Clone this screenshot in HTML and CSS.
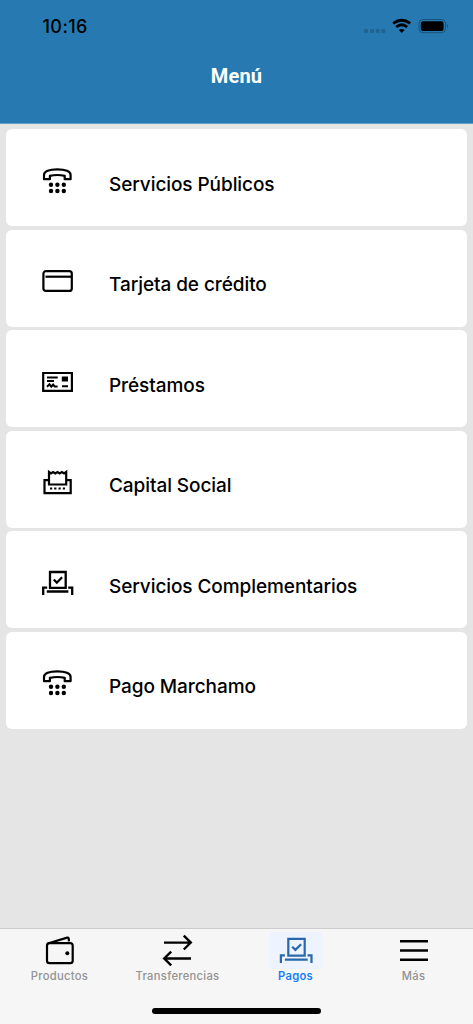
FILE: index.html
```html
<!DOCTYPE html>
<html lang="es">
<head>
<meta charset="utf-8">
<title>Menú</title>
<link rel="stylesheet" href="styles.css">
</head>
<body>
<svg width="0" height="0" class="symbols">
  <symbol id="phone" viewBox="0 0 34 32">
    <path d="M3 14.200V10C3 6.300 8 4.300 16.300 4.300s13.300 2 13.300 5.700v4.200h-5.900v-3.400q-7.400-1.600-14.800 0v3.400z" fill="none" stroke="currentColor" stroke-width="2.200" stroke-linejoin="round"/>
    <g fill="currentColor"><circle cx="10" cy="19.700" r="2.200"/><circle cx="16.400" cy="19.700" r="2.200"/><circle cx="22.800" cy="19.700" r="2.200"/><circle cx="10" cy="26" r="2.200"/><circle cx="16.400" cy="26" r="2.200"/><circle cx="22.800" cy="26" r="2.200"/></g>
  </symbol>
  <symbol id="ballot" viewBox="0 0 34 32">
    <g fill="none" stroke="currentColor" stroke-width="2.300">
      <path d="M9 5h15.700v15.800H9zM2.200 28v-7.300h4M31.200 28v-7.300h-4M5.800 24.500h21.600"/>
      <path d="M12.800 12.500l3 3.200 5.300-5.500"/>
    </g>
  </symbol>
</svg>
<div class="screen">
  <header class="header">
    <div class="status">
      <span class="time">10:16</span>
      <svg class="indicators" width="86" height="20" viewBox="0 0 86 20">
        <g fill="#1f6490"><rect x="1" y="11" width="4" height="4" rx="1"/><rect x="7" y="11" width="4" height="4" rx="1"/><rect x="12.700" y="11" width="4" height="4" rx="1"/><rect x="18.400" y="11" width="4" height="4" rx="1"/></g>
        <g fill="none" stroke="#000" stroke-width="2.800"><path d="M30.200 5.300q8.500-6.200 17 0"/><path d="M33.200 9q5.500-4.400 11 0"/></g>
        <path d="M35.800 11.900q2.900-2 5.800 0l-2.900 3.100z"/>
        <rect x="56" y="1.500" width="26.500" height="13.200" rx="4" fill="none" stroke="#17527a"/>
        <rect x="57.800" y="3.200" width="22.800" height="9.800" rx="2.500"/>
        <path d="M84 5.900q2.200 2.200 0 4.400z" fill="#17527a"/>
      </svg>
    </div>
    <h1 class="title">Menú</h1>
  </header>
  <main class="menu">
    <div class="card"><svg class="icon"><use href="#phone"/></svg><span class="label">Servicios Públicos</span></div>
    <div class="card">
      <svg class="icon" viewBox="0 0 34 32"><g fill="none" stroke="#000" stroke-width="2.200"><rect x="2.400" y="6.200" width="28.400" height="19.700" rx="2.500"/><path d="M4.500 11.700h26.300"/></g></svg>
      <span class="label">Tarjeta de crédito</span>
    </div>
    <div class="card">
      <svg class="icon" viewBox="0 0 34 32"><g fill="none" stroke="#000"><path stroke-width="2.200" d="M2.200 7h28.700v17.900H2.200z"/><path stroke-width="1.900" d="M6 11.500h10.700M6 15h7M21 20.300h6"/><path stroke-width="2" d="M6 20.800l2.500-2.500 1.800 2.300 1.800-2 1.500 1.800h3"/></g><path d="M20.800 10.500h6.200v5h-6.200z"/></svg>
      <span class="label">Préstamos</span>
    </div>
    <div class="card">
      <svg class="icon" viewBox="0 0 34 32"><g fill="none" stroke="#000" stroke-width="2.200"><path d="M8 14.200H3.500v13h26.200v-13h-4.500"/><path d="M8 18.500V6l2 1.500 2.100-1.500 2.200 1.500 2.200-1.500 2.200 1.500 2.200-1.500 2.200 1.500 2.100-1.500V18.500z"/></g><path d="M9 21.500h2.200v2H9zM13.200 21.500h2.200v2h-2.200zM17.500 21.500h2.200v2h-2.200zM21.800 21.500H24v2h-2.200z"/></svg>
      <span class="label">Capital Social</span>
    </div>
    <div class="card"><svg class="icon"><use href="#ballot"/></svg><span class="label">Servicios Complementarios</span></div>
    <div class="card"><svg class="icon"><use href="#phone"/></svg><span class="label">Pago Marchamo</span></div>
  </main>
  <nav class="tabs">
    <div class="tab">
      <svg class="tab-icon" viewBox="0 0 52 37"><g fill="none" stroke="#000" stroke-width="2.200"><rect x="13" y="11.200" width="25.700" height="20" rx="2.500"/><path d="M13.700 11.500L33.200 5.600q1.300-.3 1.500 1l.3 2.800" stroke-linejoin="round"/></g><circle cx="33.300" cy="21.300" r="2"/></svg>
      <span>Productos</span>
    </div>
    <div class="tab">
      <svg class="tab-icon" viewBox="0 0 52 37"><path d="M12 10.600h27M31.800 3.700l7 6.900-7 6.900M39 26.500H12M19.200 19.600l-7 6.900 7 6.900" fill="none" stroke="#000" stroke-width="2.400"/></svg>
      <span>Transferencias</span>
    </div>
    <div class="tab active">
      <svg class="tab-icon" viewBox="0 0 52 37"><g fill="none" stroke="currentColor" stroke-width="2.200"><path d="M18.300 6.800h16.400v16.900H18.300zM10.900 31v-7.700h4M41.500 31v-7.700h-4M14.900 27.700h22.800"/><path d="M22.200 14.700l3.200 3.200 5.700-5.700"/></g></svg>
      <span>Pagos</span>
    </div>
    <div class="tab">
      <svg class="tab-icon" viewBox="0 0 52 37"><path d="M12 9.300h28M12 18.500h28M12 27.700h28" stroke="#000" stroke-width="2.500"/></svg>
      <span>Más</span>
    </div>
    <div class="home"></div>
  </nav>
</div>
</body>
</html>
```
FILE: styles.css
```css
body { margin: 0; font-family: Inter, "Liberation Sans", sans-serif; }
.symbols { position: absolute; }
.screen { width: 473px; height: 1024px; display: flex; flex-direction: column; background: #e5e5e5; overflow: hidden; }
.header { box-sizing: border-box; height: 124px; background: #267ab1; border-bottom: 1px solid #60a0c8; flex: none; }
.status { box-sizing: border-box; height: 53px; display: flex; justify-content: space-between; align-items: center; padding: 1px 24px 0 42.500px; }
.time { font-size: 18px; font-weight: 500; line-height: 22px; letter-spacing: .4px; }
.indicators { margin-top: 2px; }
.title { margin: 8.500px 0 0; text-align: center; color: #fff; font: 700 20px/28px Roboto, sans-serif; letter-spacing: .2px; }
.menu { flex: 1; padding: 5.300px 6px 0; display: flex; flex-direction: column; gap: 3.500px; }
.card { box-sizing: border-box; height: 97px; flex: none; display: flex; align-items: flex-start; padding: 35.500px 35px 0; background: #fff; border-radius: 6px; }
.icon { width: 34px; height: 32px; flex: none; }
.label { margin: 8px 0 0 34px; font-size: 19px; font-weight: 500; line-height: 24px; letter-spacing: -.08px; white-space: nowrap; }
.tabs { box-sizing: border-box; height: 96px; border-top: 1px solid #cbcbcb; background: #f6f6f6; display: flex; flex-wrap: wrap; align-content: flex-start; justify-content: center; }
.tab { width: 118px; height: 79px; padding-top: 3px; box-sizing: border-box; display: flex; flex-direction: column; align-items: center; color: #929292; font-size: 11.200px; font-weight: 500; line-height: 14px; letter-spacing: .3px; }
.tab-icon { width: 52px; height: 37px; color: #2868ab; }
.active { color: #147efb; font-weight: 600; }
.active .tab-icon { background: #edf3ff; }
.home { width: 169px; height: 6px; border-radius: 3px; background: #000; }
```
